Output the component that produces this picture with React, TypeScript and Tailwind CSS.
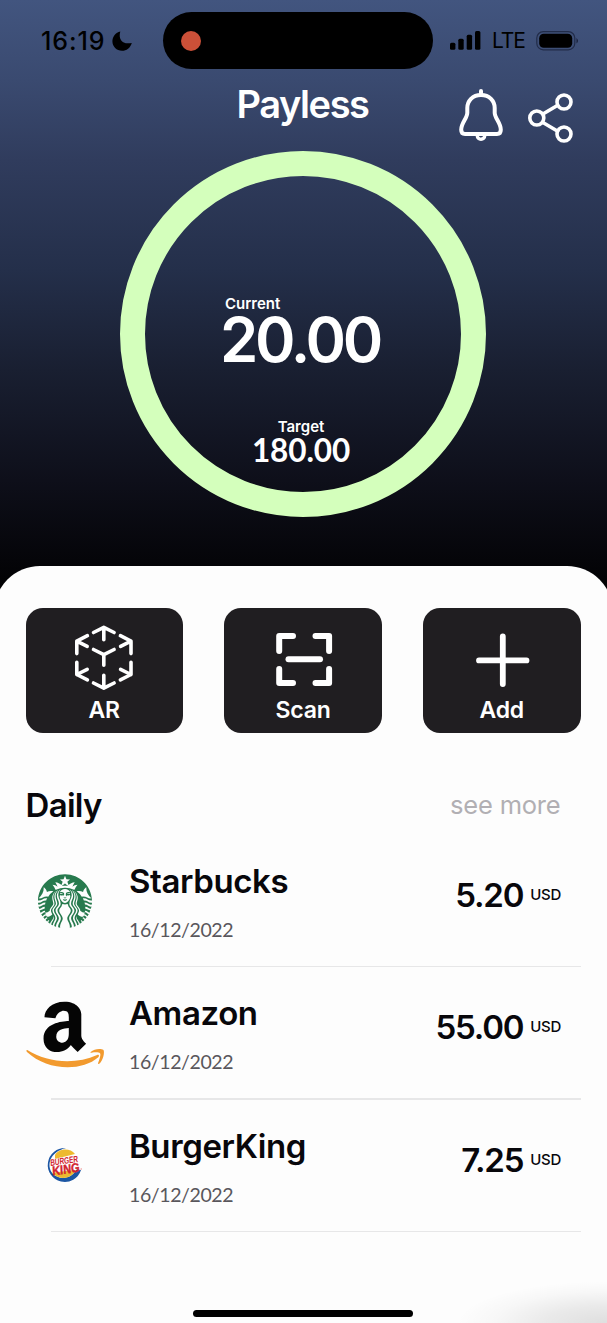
import type { ReactNode } from "react";
import { SiStarbucks } from "react-icons/si";

const inter = "font-['Inter',sans-serif]";
const lato = "font-['Lato',sans-serif]";

function StatusBar() {
  return (
    <div className="flex h-[81px] items-center">
      <div className="flex w-[163px] items-center pl-[41px]">
        <span className="w-[71px] text-[25px] leading-8 font-medium tracking-[0.900px] whitespace-nowrap text-black">16:19</span>
        <svg className="h-5 w-5" viewBox="0 0 20 20">
          <path d="M8.300.400C6 8 10.500 14 19.800 11.900 18.300 16.900 14.600 19.800 10 19.800 4.600 19.800.4 15.600.4 10.300.4 5.500 3.700 1.500 8.300.400Z" fill="#000" />
        </svg>
      </div>
      <div className="flex h-[57px] w-[270px] items-center rounded-full bg-black pl-[18px]">
        <div className="h-5 w-5 rounded-full bg-[#cc5038]" />
      </div>
      <svg className="ml-[17px] h-5 w-[31px]" viewBox="0 0 31 20" fill="#000">
        <rect x="0" y="11.800" width="5.400" height="7" rx="1.500" />
        <rect x="8.300" y="7.800" width="5.400" height="11" rx="1.500" />
        <rect x="16.700" y="3.800" width="5.400" height="15" rx="1.500" />
        <rect x="25" y="0" width="5.400" height="18.800" rx="1.500" />
      </svg>
      <span className="ml-[11px] w-[36px] text-[21px] leading-6 tracking-[-1.100px] whitespace-nowrap text-black">LTE</span>
      <svg className="ml-2 h-5 w-[44px]" viewBox="0 0 44 20">
        <rect x="0.800" y="0.600" width="38" height="18.200" rx="6.500" fill="none" stroke="#18203a" strokeOpacity="0.750" strokeWidth="1.200" />
        <rect x="3.200" y="2.700" width="33" height="14" rx="4.500" fill="#000" />
        <path d="M40.500 6.900v5.600q3-2.800 0-5.600Z" fill="#18203a" />
      </svg>
    </div>
  );
}

function BellIcon() {
  return (
    <svg className="h-[54px] w-[46px]" viewBox="0 0 46 54" fill="none" stroke="#fff" strokeWidth="4" strokeLinecap="round" strokeLinejoin="round">
      <path d="M23 4v4" />
      <path d="M23 8C14.500 8 9.300 14 9.300 21v4.700c0 5.500-6.100 10.300-6.100 17 0 2.500 1.300 4.200 3.800 4.200h32c2.500 0 3.800-1.700 3.800-4.200 0-6.700-6.100-11.500-6.100-17V21C36.700 14 31.500 8 23 8Z" />
      <path d="M19.300 48.700a3.700 3.500 0 0 0 7.400 0" strokeWidth="3.400" />
    </svg>
  );
}

function ShareIcon() {
  return (
    <svg className="h-[56px] w-[46px]" viewBox="0 0 46 56" fill="none" stroke="#fff" strokeWidth="3.600">
      <path d="m15.500 27.300 16.500-9.800M15.500 35.200l16.500 9.800" />
      <circle cx="9.800" cy="31" r="7" />
      <circle cx="37" cy="15" r="7" />
      <circle cx="37" cy="47" r="7" />
    </svg>
  );
}

function Header() {
  return (
    <div className="grid h-[70px] grid-cols-[231px_143px_233px]">
      <div />
      <h1 className="mt-[3px] text-center text-[38px] leading-[40px] font-semibold tracking-[-1.400px] text-white">Payless</h1>
      <div className="flex gap-[23px] pt-[6px] pl-[84px]">
        <BellIcon />
        <ShareIcon />
      </div>
    </div>
  );
}

function Ring() {
  return (
    <div className="ml-[120px] flex h-[366px] w-[366px] flex-col items-center rounded-full border-[25.500px] border-[#d4ffbc] pt-[118px] pr-[4px] text-white">
      <div className="flex w-[162px] flex-col">
        <span className="pl-[5px] text-[15px] leading-5 font-semibold">Current</span>
        <span className="text-[61.500px] leading-[51px] font-semibold tracking-[-3.200px] whitespace-nowrap">20.00</span>
      </div>
      <span className="mt-[52px] text-[15px] leading-5 font-semibold">Target</span>
      <span className={`${lato} text-[31.500px] leading-[27px] font-bold tracking-[-0.100px]`}>180.00</span>
    </div>
  );
}

function Action({ label, children }: { label: string; children: ReactNode }) {
  return (
    <button className="flex h-[125px] w-[157.500px] flex-col items-center rounded-[17px] bg-[#201e21] pt-[15px]">
      <svg className="h-[72px] w-[72px]" viewBox="0 0 72 72" fill="none" stroke="#fff" strokeLinecap="round" strokeLinejoin="round">
        {children}
      </svg>
      <span className="text-[23px] leading-[31px] font-semibold tracking-[-0.200px] text-white">{label}</span>
    </button>
  );
}

function Actions() {
  return (
    <div className="flex justify-between">
      <Action label="AR">
        <g strokeWidth="3.600">
          <path d="m25.500 9.500 10.300-5.200 10.300 5.200M35.800 4.500v12.300" />
          <path d="m25.500 60 10.300 5.200L46.100 60M35.800 65V52.300" />
          <path d="m19.400 12.700-10.600 5.400v12.500M8.800 18.100l10.400 5.300" />
          <path d="m52.400 12.700 10.600 5.400v12.500M63 18.100l-10.400 5.300" />
          <path d="m19.400 56.900-10.600-5.400V39.200M8.800 51.500l10.400-5.100" />
          <path d="m52.400 56.900 10.600-5.400V39.200M63 51.500l-10.400-5.100" />
          <path d="m25.500 26.500 10.300 5.200 10.300-5.200M35.800 31.700v10.500" />
        </g>
      </Action>
      <Action label="Scan">
        <g strokeWidth="6">
          <path d="M26 13H12.200v15M48.500 13h13.600v15M26 60H12.200V46M48.500 60h13.600V46" />
          <path d="M21.500 36.200h31.500" />
        </g>
      </Action>
      <Action label="Add">
        <path d="M36.800 13.500v47.500M13 37.400h47.500" strokeWidth="5.800" />
      </Action>
    </div>
  );
}

function AmazonLogo() {
  return (
    <svg className="h-[72px] w-[80px]" viewBox="0 0 80 72">
      <g transform="translate(4.500 -0.600) scale(.151)">
        <path d="M257.200 162.700c-48.700 1.800-169.500 15.500-169.500 117.500 0 109.500 138.300 114 183.500 43.200 6.500 10.200 35.400 37.500 45.300 46.800l56.800-56S341 288.900 341 261.400V114.300C341 89 316.500 32 228.700 32 140.700 32 94 87 94 136.300l73.500 6.800c16.300-49.500 54.200-49.500 54.200-49.500 40.700-.1 35.500 29.800 35.500 69.100zm0 86.800c0 80-84.200 68-84.200 17.200 0-47.200 50.500-56.700 84.200-57.800v40.600z" fill="#050505" />
      </g>
      <path d="M1.300 53.300C21 66 50 68.300 72 58.300c1.700-.7 2.600.9 1.200 2.200C56 75.500 21 74 1 55.200c-1-.9-.7-2.200.3-1.900Z" fill="#f29a2e" />
      <path d="M65.500 55.200c3.300-3.200 10-4 13-2.100 1.400 2.600-.6 10.800-4.300 14-.9.600-1.500.2-1.200-.7 1-2.800 3-8.100 2.100-9.700-1.300-1.600-5.700-1.100-8.700-.8-1 .2-1.500-.2-.9-.7Z" fill="#f29a2e" />
    </svg>
  );
}

function BurgerKingLogo() {
  return (
    <svg className="mr-[2px] h-9 w-9 overflow-visible" viewBox="0 0 36 36">
      <path d="M20 1A17 17 0 1 0 35 23L30.500 22.500C26 31.500 14 34 6.500 26.500 0 18 4 5 20 1Z" fill="#1c56a3" />
      <path d="M9 8C12 1.500 24 0 29 7L9 12Z" fill="#edb92f" />
      <path d="M8 27.500c6 5.500 18 4.500 21.500-4.500L8 25.500Z" fill="#edb92f" />
      <g transform="rotate(-8 18 18) skewX(-5)" fill="#d2232f" className="font-['Liberation_Sans',sans-serif] font-bold">
        <text x="6" y="17" fontSize="9.300" textLength="28" lengthAdjust="spacingAndGlyphs" stroke="#fff" strokeWidth="0.500" paintOrder="stroke">BURGER</text>
        <text x="7.500" y="26.800" fontSize="12.800" textLength="27.500" lengthAdjust="spacingAndGlyphs" stroke="#d2232f" strokeWidth="0.400">KING</text>
      </g>
      <circle cx="35.200" cy="22" r="0.700" fill="#ee8888" />
    </svg>
  );
}

interface Expense {
  name: string;
  date: string;
  amount: string;
  logo: ReactNode;
}

const expenses: Expense[] = [
  { name: "Starbucks", date: "16/12/2022", amount: "5.20", logo: <SiStarbucks className="mt-[1px] h-[54px] w-[54px] text-[#277a4e]" /> },
  { name: "Amazon", date: "16/12/2022", amount: "55.00", logo: <AmazonLogo /> },
  { name: "BurgerKing", date: "16/12/2022", amount: "7.25", logo: <BurgerKingLogo /> },
];

function ExpenseRow({ name, date, amount, logo }: Expense) {
  return (
    <li className="h-[132.300px]">
      <div className="flex h-[131px] items-center">
        <div className="flex w-[79px] shrink-0 justify-center">{logo}</div>
        <div className="ml-[24.500px] flex grow flex-col self-start pt-[26px]">
          <span className="text-[33px] leading-[40px] font-semibold tracking-[-0.400px]">{name}</span>
          <span className={`${lato} mt-[14px] text-[19.500px] leading-[30px] tracking-[-0.400px] text-[#59575c]`}>{date}</span>
        </div>
        <div className="mb-[11px] flex items-center gap-[7px] pr-[19.500px]">
          <span className="text-[33px] leading-10 font-semibold tracking-[-1.200px]">{amount}</span>
          <span className="text-[15px] leading-10 font-medium tracking-[-0.300px]">USD</span>
        </div>
      </div>
      <div className="ml-[25px] h-[1.300px] bg-[#e7e7e8]" />
    </li>
  );
}

export default function App() {
  return (
    <div className={`${inter} flex h-[1323px] w-[607px] flex-col overflow-hidden bg-[linear-gradient(180deg,#42557f_0px,#3a4a70_80px,#303c5d_160px,#242f4a_270px,#191f31_370px,#0e0f1a_480px,#050509_560px,#000_600px)]`}>
      <StatusBar />
      <Header />
      <Ring />
      <main className="relative mx-[-6px] mt-[49px] flex grow flex-col rounded-t-[46px] bg-[#fdfdfd] pt-[42.400px] pr-[32.500px] pl-[31.500px] text-[#08070b]">
        <Actions />
        <div className="mt-[51.500px] flex h-10 items-center justify-between pr-[20px]">
          <h2 className="text-[33px] leading-10 font-semibold tracking-[-0.700px]">Daily</h2>
          <a className="text-[25.500px] leading-10 tracking-[-0.200px] text-[#b1afb3]">see more</a>
        </div>
        <ul className="mt-[10.200px]">
          {expenses.map((e) => (
            <ExpenseRow key={e.name} {...e} />
          ))}
        </ul>
        <div className="absolute right-[6px] bottom-0 h-[45px] w-[160px] bg-[radial-gradient(ellipse_150px_42px_at_100%_100%,rgba(0,0,0,0.120)_0%,rgba(0,0,0,0.080)_40%,rgba(0,0,0,0.025)_75%,transparent_100%)]" />
        <div className="mt-auto mb-[6px] h-[7.500px] w-[220px] self-center rounded-full bg-black" />
      </main>
    </div>
  );
}
